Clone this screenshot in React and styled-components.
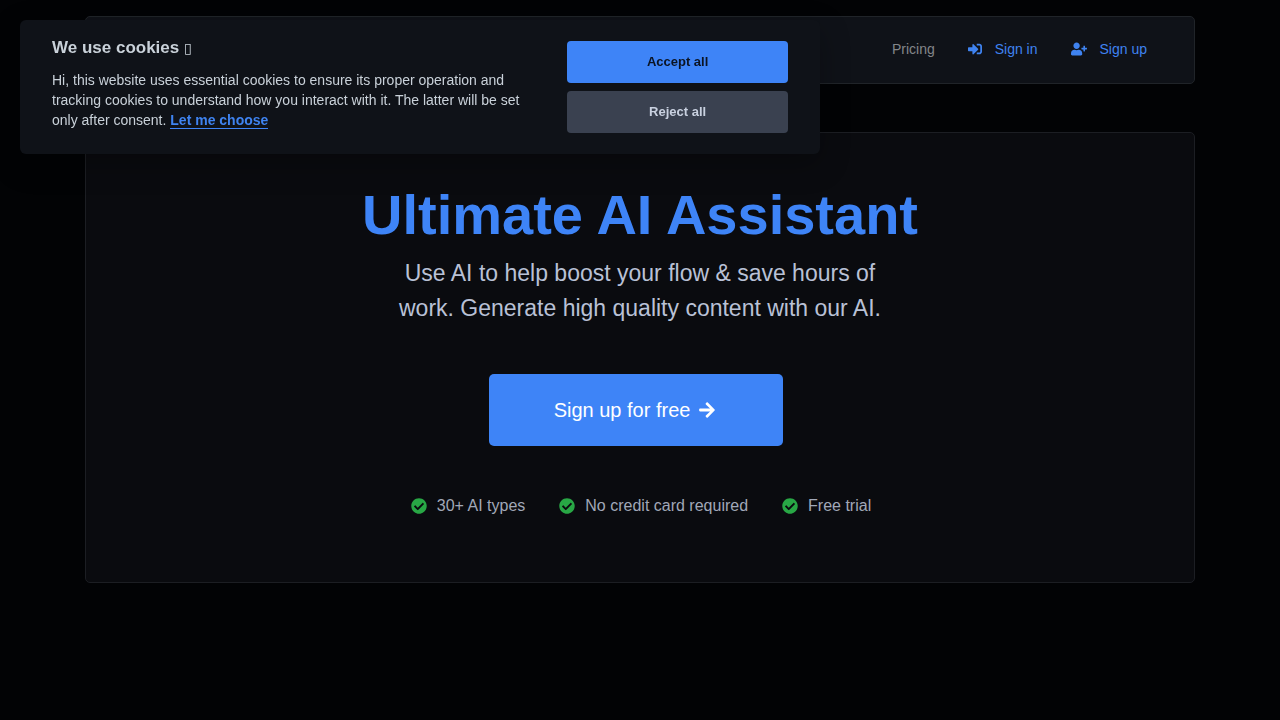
import React from "react";
import styled, { createGlobalStyle } from "styled-components";
import { FaArrowRight, FaCheckCircle, FaSignInAlt, FaUserPlus } from "react-icons/fa";

const GlobalStyle = createGlobalStyle`
  *, *::before, *::after { box-sizing: border-box; }
  body {
    margin: 0;
    min-height: 100vh;
    background: #020305;
    color: #c2c7d9;
    font-family: "Liberation Sans", Arial, sans-serif;
    font-size: 16px;
    line-height: 24px;
  }
  h1, h2, p, ul { margin: 0; padding: 0; }
`;

const Page = styled.div`
  max-width: 1142px;
  margin: 0 auto;
  padding: 16px;
  display: flex;
  flex-direction: column;
  gap: 48px;
`;

const Header = styled.header`
  min-height: 68px;
  padding: 0 47px 2px;
  display: flex;
  align-items: center;
  justify-content: flex-end;
  background: #0f1218;
  border: 1px solid #202429;
  border-radius: 5px;
`;

const Nav = styled.nav`
  display: flex;
  align-items: center;
  gap: 33px;
`;

const NavLink = styled.a`
  display: inline-flex;
  align-items: center;
  gap: 13px;
  color: ${({ $accent }) => ($accent ? "#3f83f0" : "#83868a")};
  font-size: 14px;
  line-height: 20px;
  text-decoration: none;
`;

const Hero = styled.main`
  padding: 48px 24px 64px;
  display: flex;
  flex-direction: column;
  align-items: center;
  text-align: center;
  background: #0a0b0f;
  border: 1px solid #1c1e23;
  border-radius: 5px;
`;

const Title = styled.h1`
  color: #3e84f7;
  font-size: 56px;
  line-height: 68px;
  font-weight: 700;
`;

const Lead = styled.p`
  max-width: 520px;
  padding-top: 7px;
  color: #b9c1d6;
  font-size: 23px;
  line-height: 35px;
`;

const Actions = styled.div`
  padding: 48px 8px 48px 0;
`;

const SignUpLink = styled.a`
  display: inline-flex;
  align-items: center;
  justify-content: center;
  gap: 8px;
  min-width: 294px;
  height: 72px;
  padding-right: 2px;
  background: #3e84f7;
  border-radius: 5px;
  color: #fff;
  font-size: 20px;
  text-decoration: none;
  vertical-align: top;
`;

const Features = styled.ul`
  padding-left: 2px;
  display: flex;
  flex-wrap: wrap;
  justify-content: center;
  gap: 8px 34px;
  list-style: none;
`;

const Feature = styled.li`
  display: flex;
  align-items: center;
  gap: 10px;
  color: #a1a8b8;

  svg { color: #28a745; }
`;

const CookieBanner = styled.section`
  position: fixed;
  top: 20px;
  left: 20px;
  width: min(800px, calc(100% - 40px));
  padding: 16px 32px 21px;
  display: flex;
  align-items: flex-start;
  gap: 32px;
  background: #0f1218;
  border-radius: 6px;
  box-shadow: 0 10px 30px rgba(2, 2, 3, 0.28);
  color: #c9d1d9;
`;

const CookieText = styled.div`
  flex: 1;
`;

const CookieTitle = styled.h2`
  font-size: 17px;
  line-height: 24px;
  font-weight: 700;
`;

const Glyph = styled.span`
  font-family: "DejaVu Sans", sans-serif;
  font-size: 14px;
  font-weight: 400;
  line-height: 16px;
`;

const CookieBody = styled.p`
  padding-top: 10px;
  max-width: 480px;
  font-size: 14px;
  line-height: 20px;
`;

const ChooseButton = styled.button`
  padding: 0;
  border: 0;
  border-bottom: 1px solid #3e84f7;
  background: none;
  color: #3f83f0;
  font: inherit;
  font-weight: 700;
  line-height: 16px;
  cursor: pointer;
`;

const CookieActions = styled.div`
  flex: 0 0 30%;
  padding-top: 5px;
  display: flex;
  flex-direction: column;
  gap: 8px;
`;

const CookieButton = styled.button`
  height: 42px;
  padding: 0 8px 2px;
  border: 0;
  border-radius: 4px;
  background: ${({ $primary }) => ($primary ? "#3e84f7" : "#3a4150")};
  color: ${({ $primary }) => ($primary ? "#0b1423" : "#c9d1e0")};
  font-family: inherit;
  font-size: 13px;
  font-weight: 700;
  cursor: pointer;
`;

const features = ["30+ AI types", "No credit card required", "Free trial"];

export default function App() {
  return (
    <>
      <GlobalStyle />
      <Page>
        <Header>
          <Nav aria-label="Main">
            <NavLink href="#pricing">Pricing</NavLink>
            <NavLink href="#sign-in" $accent>
              <FaSignInAlt size={14} aria-hidden="true" />
              Sign in
            </NavLink>
            <NavLink href="#sign-up" $accent>
              <FaUserPlus size={16} aria-hidden="true" />
              Sign up
            </NavLink>
          </Nav>
        </Header>
        <Hero>
          <Title>Ultimate AI Assistant</Title>
          <Lead>Use AI to help boost your flow &amp; save hours of work. Generate high quality content with our AI.</Lead>
          <Actions>
            <SignUpLink href="#sign-up">
              Sign up for free
              <FaArrowRight size={18} aria-hidden="true" />
            </SignUpLink>
          </Actions>
          <Features>
            {features.map((label) => (
              <Feature key={label}>
                <FaCheckCircle size={16} aria-hidden="true" />
                {label}
              </Feature>
            ))}
          </Features>
        </Hero>
      </Page>
      <CookieBanner role="dialog" aria-labelledby="cookie-title">
        <CookieText>
          <CookieTitle id="cookie-title">We use cookies <Glyph>▯</Glyph></CookieTitle>
          <CookieBody>
            Hi, this website uses essential cookies to ensure its proper operation and tracking cookies to
            understand how you interact with it. The latter will be set only after consent.{" "}
            <ChooseButton type="button">Let me choose</ChooseButton>
          </CookieBody>
        </CookieText>
        <CookieActions>
          <CookieButton type="button" $primary>Accept all</CookieButton>
          <CookieButton type="button">Reject all</CookieButton>
        </CookieActions>
      </CookieBanner>
    </>
  );
}
